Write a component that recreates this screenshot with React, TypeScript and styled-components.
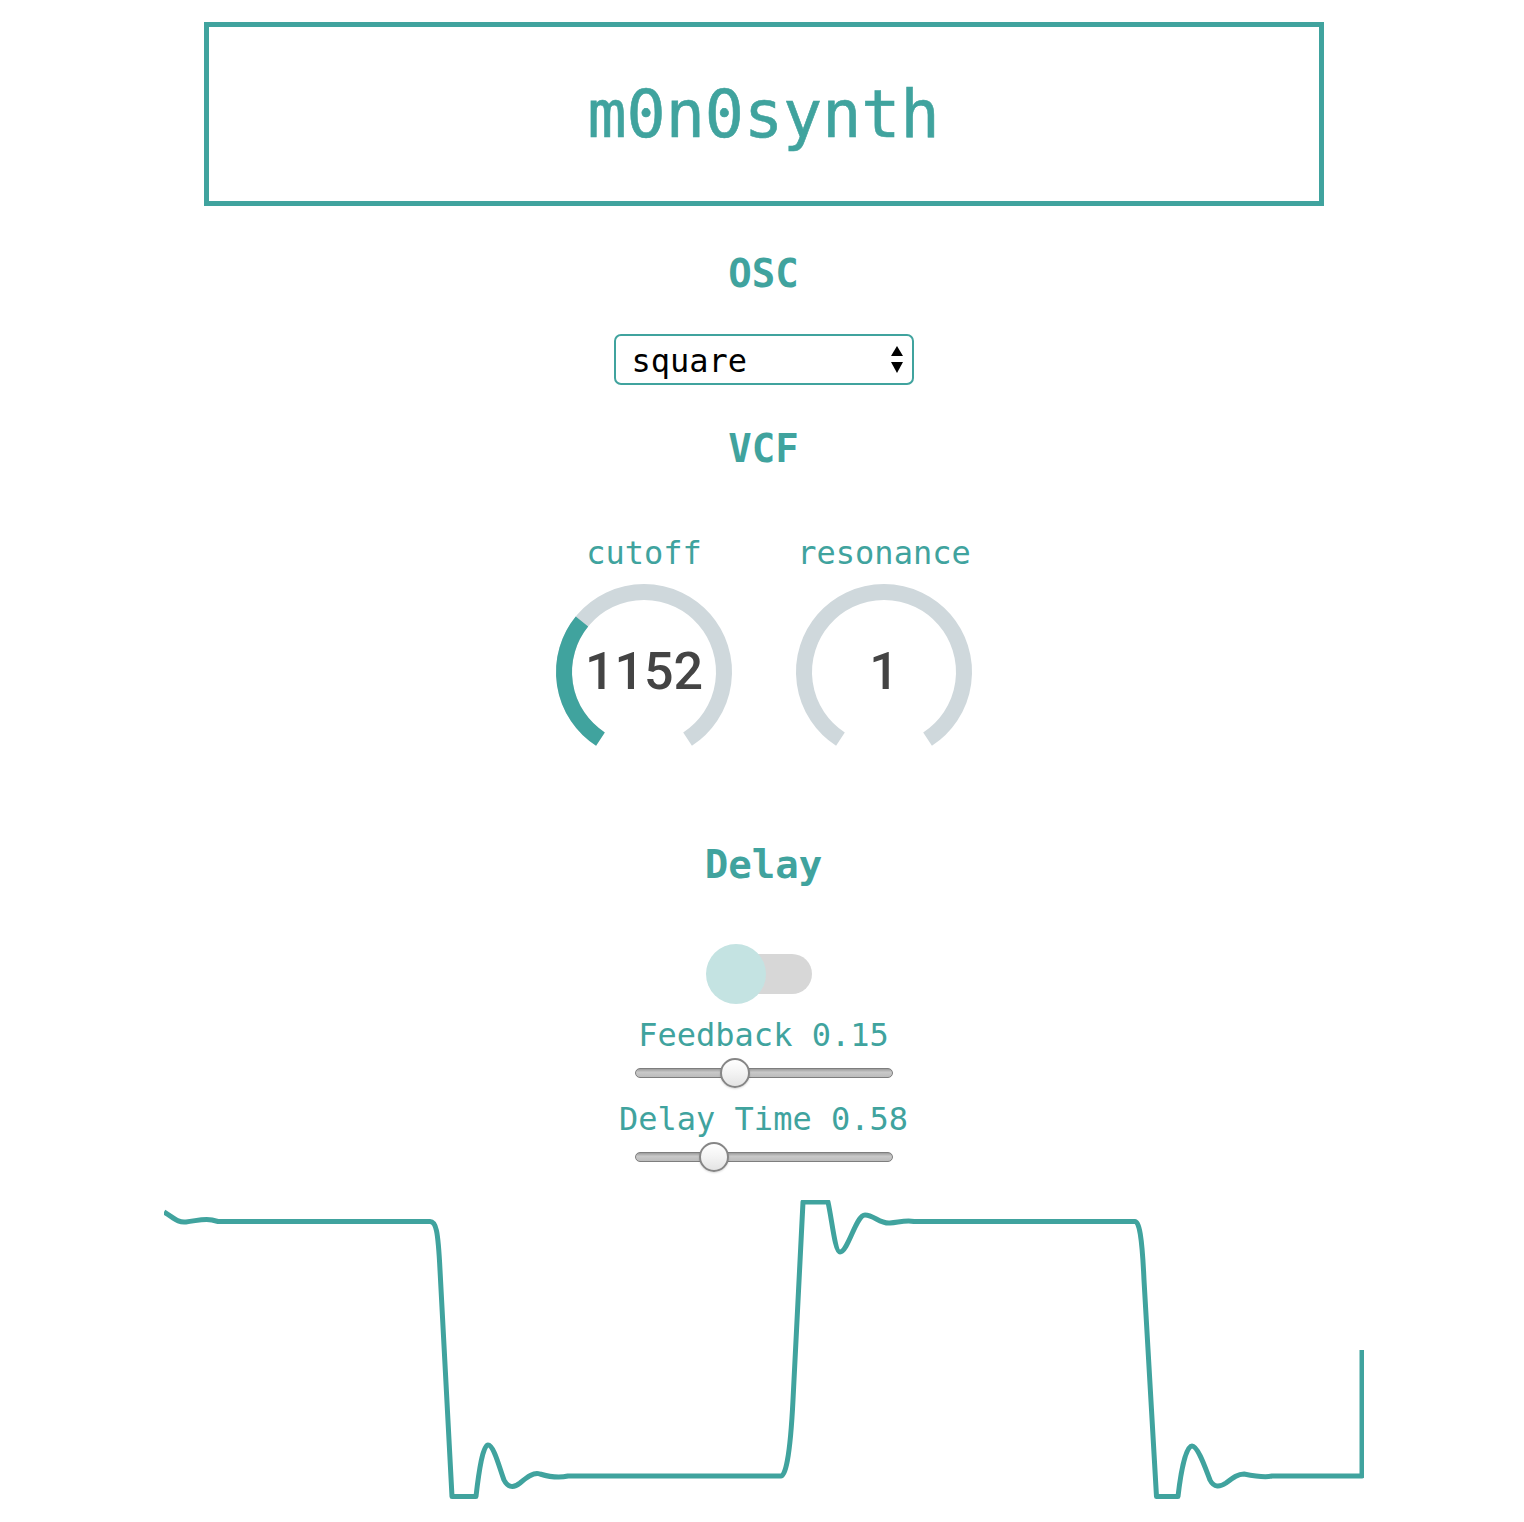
import React from "react";
import styled, { createGlobalStyle } from "styled-components";

const TEAL = "#40a39e";
const MONO = `"DejaVu Sans Mono", "Liberation Mono", monospace`;

const GlobalStyle = createGlobalStyle`
  html, body { margin: 0; padding: 0; background: #ffffff; }
  body { font-family: ${MONO}; }
`;

const Page = styled.main`
  display: flex;
  flex-direction: column;
  align-items: center;
  padding: 22px 0 0 3px;
`;

const TitleBox = styled.header`
  box-sizing: border-box;
  width: 1120px;
  height: 184px;
  border: 5px solid ${TEAL};
  display: flex;
  align-items: center;
  justify-content: center;
`;

const Title = styled.h1`
  margin: 0;
  font-family: ${MONO};
  font-weight: normal;
  font-size: 65px;
  line-height: 1;
  color: ${TEAL};
  -webkit-text-stroke: 0.6px ${TEAL};
`;

const Heading = styled.h2<{ $top: number }>`
  margin: ${(p) => p.$top}px 0 0;
  font-family: ${MONO};
  font-weight: bold;
  font-size: 39px;
  line-height: 48px;
  height: 48px;
  color: ${TEAL};
`;

const SelectWrap = styled.div`
  position: relative;
  margin-top: 36px;
  width: 300px;
  height: 51px;
`;

const Select = styled.select`
  appearance: none;
  -webkit-appearance: none;
  box-sizing: border-box;
  width: 100%;
  height: 100%;
  border: 2px solid ${TEAL};
  border-radius: 7px;
  background: #ffffff;
  color: #000000;
  font-family: ${MONO};
  font-size: 32px;
  padding: 2px 0 0 16px;
  outline: none;
`;

const SelectArrows = styled.svg`
  position: absolute;
  right: 11px;
  top: 12px;
  pointer-events: none;
`;

const KnobRow = styled.div`
  display: flex;
  gap: 40px;
  margin-top: 61px;
  padding-left: 1px;
`;

const KnobCol = styled.div`
  width: 200px;
  display: flex;
  flex-direction: column;
  align-items: center;
  gap: 10px;
`;

const KnobLabel = styled.span`
  font-family: ${MONO};
  font-size: 32px;
  line-height: 38px;
  color: ${TEAL};
`;

const KnobSvg = styled.svg`
  display: block;
`;

const KnobValue = styled.text`
  font-family: Roboto, "Liberation Sans", sans-serif;
  font-size: 52px;
  font-weight: 500;
  fill: #444444;
`;

const Toggle = styled.div`
  position: relative;
  margin-top: 55px;
  margin-right: 10px;
  width: 106px;
  height: 60px;
  display: flex;
  align-items: center;
  justify-content: flex-end;
`;

const ToggleTrack = styled.div`
  width: 96px;
  height: 40px;
  border-radius: 20px;
  background: #d7d7d7;
`;

const ToggleThumb = styled.div`
  position: absolute;
  left: 0;
  top: 0;
  width: 60px;
  height: 60px;
  border-radius: 50%;
  background: #c4e3e2;
`;

const SliderLabel = styled.label<{ $top: number }>`
  margin-top: ${(p) => p.$top}px;
  font-family: ${MONO};
  font-size: 32px;
  line-height: 38px;
  color: ${TEAL};
  white-space: pre;
`;

const Slider = styled.div`
  position: relative;
  margin-top: 4px;
  width: 258px;
  height: 30px;
  display: flex;
  align-items: center;
`;

const SliderTrack = styled.div`
  box-sizing: border-box;
  width: 100%;
  height: 10px;
  border-radius: 5px;
  border: 1px solid #7e7e7e;
  background: linear-gradient(#9c9c9c, #c9c9c9 40%, #bcbcbc);
`;

const SliderThumb = styled.div`
  position: absolute;
  top: 0;
  box-sizing: border-box;
  width: 30px;
  height: 30px;
  border-radius: 50%;
  border: 2px solid #868686;
  background: linear-gradient(#ffffff, #f3f3f3 50%, #e4e4e4);
  box-shadow: 0 1px 2px rgba(0, 0, 0, 0.15);
`;

const Scope = styled.svg`
  display: block;
  margin-top: 28px;
`;

const polar = (cx: number, cy: number, r: number, deg: number) => {
  const a = (deg * Math.PI) / 180;
  return [cx + r * Math.sin(a), cy - r * Math.cos(a)];
};

const arc = (cx: number, cy: number, r: number, a: number, b: number) => {
  const [x1, y1] = polar(cx, cy, r, a);
  const [x2, y2] = polar(cx, cy, r, b);
  const large = b - a > 180 ? 1 : 0;
  return `M${x1.toFixed(2)},${y1.toFixed(2)} A${r},${r} 0 ${large} 1 ${x2.toFixed(2)},${y2.toFixed(2)}`;
};

const START = -147;
const END = 147;

function Knob({ label, value, frac }: { label: string; value: string; frac: number }) {
  const valEnd = START + (END - START) * frac;
  return (
    <KnobCol>
      <KnobLabel>{label}</KnobLabel>
      <KnobSvg width="180" height="180" viewBox="0 0 180 180">
        <path d={arc(90, 90, 80, START, END)} fill="none" stroke="#cfd8dc" strokeWidth="16" />
        {frac > 0 && (
          <path d={arc(90, 90, 80, START, valEnd)} fill="none" stroke={TEAL} strokeWidth="16" />
        )}
        <KnobValue x="90" y="107" textAnchor="middle">
          {value}
        </KnobValue>
      </KnobSvg>
    </KnobCol>
  );
}

function RangeSlider({ label, value, frac, top }: { label: string; value: string; frac: number; top: number }) {
  const left = frac * (258 - 30);
  return (
    <>
      <SliderLabel $top={top}>{`${label} ${value}`}</SliderLabel>
      <Slider>
        <SliderTrack />
        <SliderThumb style={{ left }} />
      </Slider>
    </>
  );
}

const wave = `M0,12
C 10,18 14,23 22,22
C 32,21 40,18 48,20
L 54,21.5
L 266,21.5
C 272,21.5 274,30 276,70
L 288,296.5
L 312,296.5
C 315,270 319,245 324,245
C 330,245 336,270 340,280
C 344,288 350,288 356,283
C 364,276 370,272 376,274
C 386,277 396,278 404,276
L 617,276
C 621,276 626,260 629,200
L 639,2
L 664,2
C 668,20 671,52 676,52
C 684,52 692,15 701,15
C 710,15 716,24 726,23
C 736,22 742,20 750,21.5
L 971,21.5
C 975,21.5 978,35 980,80
L 992.5,296.5
L 1014,296.5
C 1017,270 1022,246 1028,246
C 1034,246 1042,270 1046,280
C 1050,288 1056,287 1062,283
C 1070,277 1074,274 1080,274
C 1090,276 1100,278 1108,276
L 1198,276
L 1198,150`;

export default function App() {
  return (
    <>
      <GlobalStyle />
      <Page>
        <TitleBox>
          <Title>m0n0synth</Title>
        </TitleBox>

        <Heading $top={44}>OSC</Heading>
        <SelectWrap>
          <Select defaultValue="square">
            <option value="sine">sine</option>
            <option value="square">square</option>
            <option value="sawtooth">sawtooth</option>
            <option value="triangle">triangle</option>
          </Select>
          <SelectArrows width="12" height="27" viewBox="0 0 12 27">
            <path d="M6,0 L12,10 L0,10 Z" fill="#000" />
            <path d="M0,16 L12,16 L6,27 Z" fill="#000" />
          </SelectArrows>
        </SelectWrap>

        <Heading $top={40}>VCF</Heading>
        <KnobRow>
          <Knob label="cutoff" value="1152" frac={0.327} />
          <Knob label="resonance" value="1" frac={0} />
        </KnobRow>

        <Heading $top={79}>Delay</Heading>
        <Toggle>
          <ToggleTrack />
          <ToggleThumb />
        </Toggle>

        <RangeSlider label="Feedback" value="0.15" frac={0.377} top={12} />
        <RangeSlider label="Delay Time" value="0.58" frac={0.285} top={12} />

        <Scope width="1200" height="300" viewBox="0 0 1200 300">
          <path d={wave} fill="none" stroke={TEAL} strokeWidth="5" strokeLinejoin="round" />
        </Scope>
      </Page>
    </>
  );
}
